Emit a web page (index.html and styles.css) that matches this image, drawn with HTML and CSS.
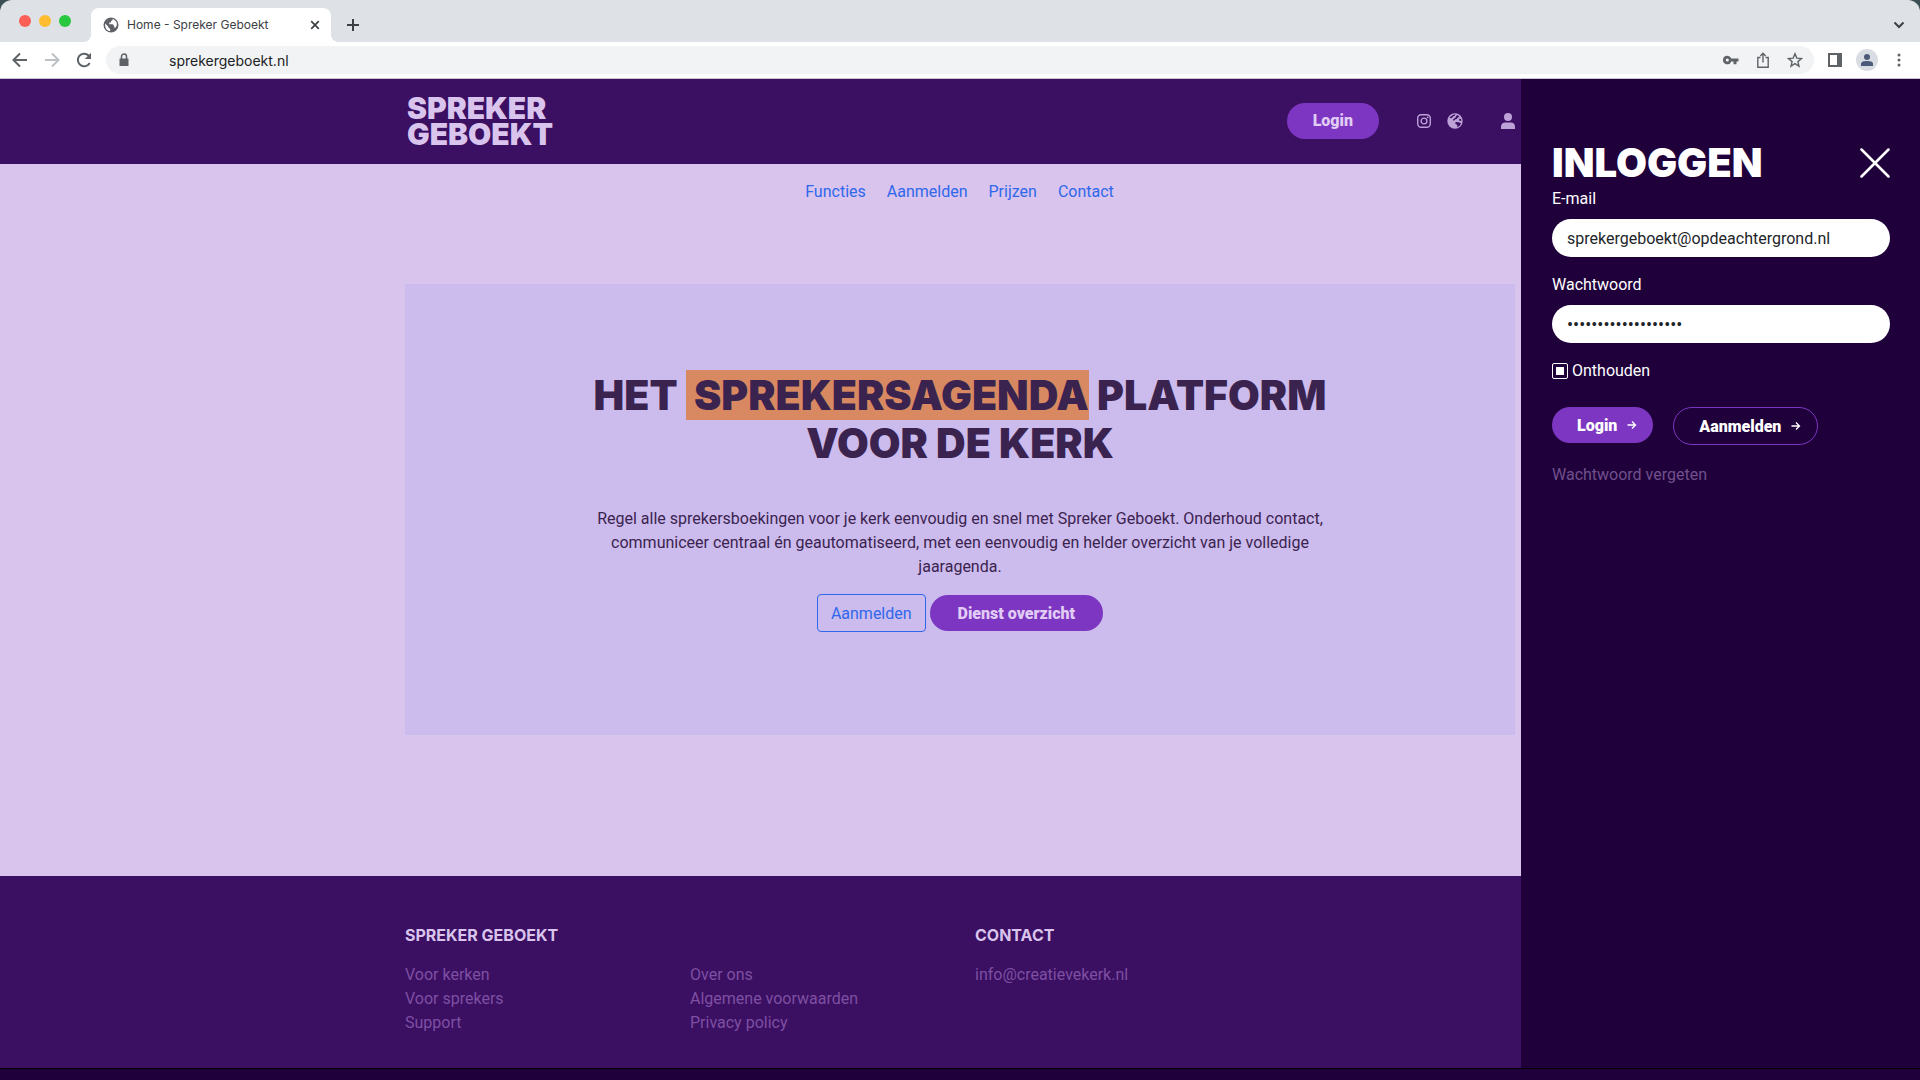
FILE: index.html
```
<!DOCTYPE html>
<html lang="nl">

<head>
    <meta charset="utf-8">
    <title>Home - Spreker Geboekt</title>
    <link rel="stylesheet" href="styles.css">
</head>

<body>
    <div class="browser">
        <div class="tabbar">
            <div class="lights">
                <span class="light red"></span>
                <span class="light yellow"></span>
                <span class="light green"></span>
            </div>
            <div class="tab">
                <svg width="16" height="16" viewBox="0 0 16 16"><circle cx="8" cy="8" r="7.5" fill="#5f6368"/><path d="M2.2 6.5l3.2 3.2v1.1l1.7 1v2.3C4 13.9 1.6 11 2.2 6.5zM9.5 1.9v1.3l-1.5.8v1.5H6.3v1.8h3.5l1.3 1.6v1.5h1.7c1-1.4 1.4-3 .9-4.6-.6-1.9-2.2-3.4-4.2-3.9z" fill="#fff"/></svg>
                <span class="tab-title">Home - Spreker Geboekt</span>
                <button class="icon-btn" aria-label="Tab sluiten">
                    <svg width="10" height="10" viewBox="0 0 10 10"><path d="M1.2 1.2l7.6 7.6M8.8 1.2L1.2 8.8" stroke="#3c4043" stroke-width="1.7" fill="none"/></svg>
                </button>
            </div>
            <button class="icon-btn new-tab" aria-label="Nieuw tabblad">
                <svg width="14" height="14" viewBox="0 0 14 14"><path d="M7 1v12M1 7h12" stroke="#3c4043" stroke-width="2" fill="none"/></svg>
            </button>
            <button class="icon-btn tab-search" aria-label="Tabbladen zoeken">
                <svg width="12" height="8" viewBox="0 0 12 8"><path d="M1.5 1.5L6 6l4.5-4.5" stroke="#3c4043" stroke-width="2" fill="none"/></svg>
            </button>
        </div>
        <div class="toolbar">
            <div class="history">
                <button class="icon-btn" aria-label="Vorige">
                    <svg width="16" height="16" viewBox="0 0 16 16"><path d="M15 8H2M8 1.5L1.5 8 8 14.5" stroke="#5f6368" stroke-width="2" fill="none"/></svg>
                </button>
                <button class="icon-btn" aria-label="Volgende">
                    <svg width="16" height="16" viewBox="0 0 16 16"><path d="M1 8h13M8 1.5L14.5 8 8 14.5" stroke="#bdc1c6" stroke-width="2" fill="none"/></svg>
                </button>
                <button class="icon-btn" aria-label="Vernieuwen">
                    <svg width="16" height="16" viewBox="0 0 16 16"><path d="M13.7 11A6.3 6.3 0 1 1 12.6 3.5L14 5" stroke="#5f6368" stroke-width="2" fill="none"/><path d="M15 .8V7H8.8z" fill="#5f6368"/></svg>
                </button>
            </div>
            <div class="omnibox">
                <svg width="10" height="14" viewBox="0 0 10 14"><path d="M.5 5.5h9V13h-9z" fill="#5f6368"/><path d="M2.5 6V3.5a2.5 2.5 0 0 1 5 0V6" stroke="#5f6368" stroke-width="1.5" fill="none"/></svg>
                <input class="url" type="text" value="sprekergeboekt.nl" aria-label="Adres">
                <svg width="16" height="14" viewBox="0 0 16 14"><path d="M4.3 2.7a4.3 4.3 0 1 0 4 5.8h2.2v2.7h3V8.5H15.5v-3H8.3a4.3 4.3 0 0 0-4-2.8zm0 2.7a1.6 1.6 0 1 1 0 3.2 1.6 1.6 0 0 1 0-3.2z" fill="#5f6368"/></svg>
                <svg width="12" height="16" viewBox="0 0 12 16"><path d="M3.5 5.5H.8v9.7h10.4V5.5H8.5M6 10.5V1.5M3.3 4L6 1.3 8.7 4" stroke="#5f6368" stroke-width="1.4" fill="none"/></svg>
                <svg width="16" height="16" viewBox="0 0 16 16"><path d="M8 1.8l1.8 4.3 4.7.4-3.6 3.1 1.1 4.6L8 11.7l-4 2.5 1.1-4.6L1.5 6.5l4.7-.4z" stroke="#5f6368" stroke-width="1.4" fill="none"/></svg>
            </div>
            <button class="icon-btn" aria-label="Zijpaneel">
                <svg width="14" height="14" viewBox="0 0 14 14"><path d="M1 1h12v12H1z" stroke="#5f6368" stroke-width="2" fill="none"/><path d="M9 1h4v12H9z" fill="#5f6368"/></svg>
            </button>
            <button class="icon-btn avatar" aria-label="Profiel">
                <svg width="12" height="12" viewBox="0 0 12 12"><circle cx="6" cy="3" r="3" fill="#4a5a78"/><path d="M0 12V9.5C0 7.8 3 7 6 7s6 .8 6 2.5V12z" fill="#4a5a78"/></svg>
            </button>
            <button class="icon-btn more" aria-label="Menu">
                <svg width="4" height="14" viewBox="0 0 4 14"><circle cx="2" cy="2" r="1.5" fill="#5f6368"/><circle cx="2" cy="7" r="1.5" fill="#5f6368"/><circle cx="2" cy="12" r="1.5" fill="#5f6368"/></svg>
            </button>
        </div>
    </div>
    <div class="view">
        <div class="site">
            <header class="header">
                <div class="container header-row">
                    <a class="logo" href="#">Spreker<br>Geboekt</a>
                    <button class="btn">Login</button>
                    <nav class="social">
                        <a href="#" aria-label="Instagram"><svg width="14" height="14" viewBox="0 0 14 14"><rect x=".7" y=".7" width="12.6" height="12.6" rx="3.5" stroke="#bda2d8" stroke-width="1.4" fill="none"/><circle cx="7" cy="7" r="2.9" stroke="#bda2d8" stroke-width="1.4" fill="none"/><circle cx="10.7" cy="3.3" r=".9" fill="#bda2d8"/></svg></a>
                        <a href="#" aria-label="Website"><svg width="16" height="16" viewBox="0 0 16 16"><circle cx="8" cy="8" r="7.7" fill="#bda2d8"/><path d="M4 3.2C5.500 2 7 1.500 8.500 1.600L7.500 3 6 3.300 5.500 4.500 3.500 5.200 2.500 5zM10 2l2.500 1.300L11 4.500 9.500 6 8 6.500 6.500 8 6 6.500 8.500 4.500zM12.500 5.500l1.500.5.300 2L12 7.500zM8.500 9l3 .3 2.500 1-1.500 2.700-2.500 1.200L10.500 12 8.500 11z" fill="#3b0d62"/></svg></a>
                    </nav>
                    <a class="account" href="#" aria-label="Account"><svg width="14" height="16" viewBox="0 0 14 16"><circle cx="7" cy="4" r="4" fill="#bda2d8"/><path d="M0 16v-2.5C0 11 2 9.5 4 9.5h6c2 0 4 1.5 4 4V16z" fill="#bda2d8"/></svg></a>
                </div>
            </header>
            <main class="main">
                <nav class="menu">
                    <a href="#">Functies</a>
                    <a href="#">Aanmelden</a>
                    <a href="#">Prijzen</a>
                    <a href="#">Contact</a>
                </nav>
                <section class="container hero">
                    <div class="hero-text">
                        <h1>Het <mark>&nbsp;Sprekersagenda</mark> platform voor de kerk</h1>
                        <p>Regel alle sprekersboekingen voor je kerk eenvoudig en snel met Spreker Geboekt. Onderhoud contact, communiceer centraal én geautomatiseerd, met een eenvoudig en helder overzicht van je volledige jaaragenda.</p>
                        <div class="hero-actions">
                            <button class="btn-line">Aanmelden</button>
                            <button class="btn">Dienst overzicht</button>
                        </div>
                    </div>
                </section>
            </main>
            <footer class="footer">
                <div class="container footer-grid">
                    <h2>Spreker Geboekt</h2>
                    <h2 class="contact-title">Contact</h2>
                    <ul>
                        <li><a href="#">Voor kerken</a></li>
                        <li><a href="#">Voor sprekers</a></li>
                        <li><a href="#">Support</a></li>
                    </ul>
                    <ul>
                        <li><a href="#">Over ons</a></li>
                        <li><a href="#">Algemene voorwaarden</a></li>
                        <li><a href="#">Privacy policy</a></li>
                    </ul>
                    <ul>
                        <li><a href="#">info@creatievekerk.nl</a></li>
                    </ul>
                </div>
            </footer>
        </div>
        <aside class="panel">
            <div class="panel-head">
                <h2>Inloggen</h2>
                <button class="icon-btn" aria-label="Sluiten">
                    <svg width="30" height="30" viewBox="0 0 30 30"><path d="M1.5 1.5l27 27M28.5 1.5l-27 27" stroke="#fff" stroke-width="2.5" stroke-linecap="round" fill="none"/></svg>
                </button>
            </div>
            <form>
                <label for="email">E-mail</label>
                <input class="field" type="email" id="email" value="sprekergeboekt@opdeachtergrond.nl">
                <label for="pass">Wachtwoord</label>
                <input class="field" type="password" id="pass" value="sprekersagenda12345">
                <div class="remember">
                    <input type="checkbox" id="remember" checked>
                    <label for="remember">Onthouden</label>
                </div>
                <div class="panel-actions">
                    <button class="btn" type="button">Login <svg width="10" height="10" viewBox="0 0 10 10"><path d="M.5 5h8M5 1.5L8.5 5 5 8.5" stroke="#fff" stroke-width="1.3" fill="none"/></svg></button>
                    <button class="btn btn-outline" type="button">Aanmelden <svg width="10" height="10" viewBox="0 0 10 10"><path d="M.5 5h8M5 1.5L8.5 5 5 8.5" stroke="#fff" stroke-width="1.3" fill="none"/></svg></button>
                </div>
                <a class="forgot" href="#">Wachtwoord vergeten</a>
            </form>
        </aside>
    </div>
    <div class="strip"></div>
</body>

</html>
```
FILE: styles.css
```
* {
    box-sizing: border-box;
}

body {
    margin: 0;
    min-height: 100vh;
    display: flex;
    flex-direction: column;
    background: #3c4f55;
    color: #3b2350;
    font-family: Roboto, "Liberation Sans", sans-serif;
    font-size: 16px;
    line-height: 24px;
}

h1,
h2,
p,
ul {
    margin: 0;
    padding: 0;
}

h1,
h2,
.logo {
    font-family: Inter, Roboto, sans-serif;
    text-transform: uppercase;
}

a {
    text-decoration: none;
}

svg {
    display: block;
    flex: none;
}

button {
    font-family: inherit;
    cursor: pointer;
}

.icon-btn {
    display: flex;
    padding: 0;
    border: 0;
    background: none;
}

/* browser */
.browser {
    background: #dee1e6;
    border-radius: 12px 12px 0 0;
    border-bottom: 1px solid #c9c5cf;
    font-family: Inter, Roboto, sans-serif;
}

.tabbar {
    display: flex;
    align-items: center;
    height: 42px;
    padding: 0 15px 0 19px;
}

.lights {
    display: flex;
    gap: 8px;
    margin-right: 20px;
}

.light {
    width: 12px;
    height: 12px;
    border-radius: 50%;
}

.red {
    background: #fe5f57;
}

.yellow {
    background: #febc2e;
}

.green {
    background: #28c840;
}

.tab {
    position: relative;
    display: flex;
    align-items: center;
    align-self: flex-end;
    width: 240px;
    height: 34px;
    padding: 0 11px 0 12px;
    background: #fff;
    border-radius: 8px 8px 0 0;
    color: #3c4043;
    font-size: 12px;
}

.tab::before,
.tab::after {
    content: "";
    position: absolute;
    bottom: 0;
    left: -8px;
    width: 8px;
    height: 8px;
    background: radial-gradient(circle at 0 0, transparent 8px, #fff 8px);
}

.tab::after {
    left: 100%;
    background: radial-gradient(circle at 100% 0, transparent 8px, #fff 8px);
}

.tab-title {
    flex: 1;
    padding-left: 8px;
}

.new-tab {
    margin: 8px 0 0 15px;
}

.tab-search {
    margin: 8px 0 0 auto;
}

.toolbar {
    display: flex;
    align-items: center;
    gap: 14px;
    height: 36px;
    padding: 0 19px 0 12px;
    background: #fff;
}

.history {
    display: flex;
    gap: 16px;
}

.omnibox {
    flex: 1;
    display: flex;
    align-items: center;
    gap: 18px;
    height: 28px;
    padding: 0 11px 0 13px;
    background: #f1f3f4;
    border-radius: 14px;
}

.url {
    flex: 1;
    padding: 0 0 0 22px;
    border: 0;
    background: none;
    color: #202124;
    font-family: inherit;
    font-size: 14px;
}

.avatar {
    width: 22px;
    height: 22px;
    align-items: center;
    justify-content: center;
    border-radius: 50%;
    background: #dadce4;
}

.more {
    margin-left: 5px;
}

/* site */
.view {
    flex: 1;
    display: flex;
    background: #1f003b;
}

.site {
    flex: 1;
    display: flex;
    flex-direction: column;
    background: #d8c4ec;
}

.container {
    width: 1110px;
    margin: 0 6px 0 auto;
}

.header {
    display: flex;
    height: 85px;
    background: #3b0f62;
}

.header-row {
    display: flex;
    align-items: center;
    padding-bottom: 2px;
}

.logo {
    flex: 1;
    padding-left: 2px;
    color: #d8c4ec;
    font-size: 30px;
    font-weight: 900;
    line-height: 26px;
}

.btn {
    display: inline-flex;
    align-items: center;
    gap: 10px;
    height: 36px;
    padding: 0 26px;
    border: 0;
    border-radius: 18px;
    background: #7c36c1;
    color: #e0ccf4;
    font-size: 16px;
    font-weight: 900;
}

.social {
    display: flex;
    align-items: center;
    gap: 16px;
    margin: 0 38px;
}

.main {
    flex: 1;
}

.menu {
    display: flex;
    justify-content: center;
    gap: 21px;
    padding: 16px 0 80px 398px;
}

.menu a {
    color: #2f68ec;
}

.hero {
    display: flex;
    justify-content: center;
    padding: 87px 0 103px;
    background: #ccbbed;
    text-align: center;
}

.hero-text {
    width: 740px;
}

.hero h1 {
    margin-bottom: 40px;
    font-size: 41px;
    font-weight: 900;
    line-height: 48px;
}

.hero mark {
    background: #d98961;
    color: inherit;
}

.hero-actions {
    display: flex;
    align-items: center;
    justify-content: center;
    gap: 4px;
    margin-top: 15px;
}

.hero-actions .btn {
    padding: 0 28px;
}

.btn-line {
    height: 38px;
    padding: 0 13px;
    border: 1px solid #2f68ec;
    border-radius: 4px;
    background: none;
    color: #2f68ec;
    font-size: 16px;
}

/* footer */
.footer {
    padding: 47px 0 33px;
    background: #3b0f62;
}

.footer-grid {
    display: grid;
    grid-template-columns: 285px 285px 1fr;
    row-gap: 16px;
}

.footer h2 {
    color: #d8c4ec;
    font-size: 16px;
}

.contact-title {
    grid-column: 3;
}

.footer ul {
    list-style: none;
}

.footer a {
    color: #7e4fa3;
}

/* login */
.panel {
    width: 399px;
    padding: 60px 30px 0 31px;
    color: #fff;
}

.panel-head {
    display: flex;
    align-items: center;
    justify-content: space-between;
}

.panel h2 {
    font-size: 40px;
    font-weight: 900;
    line-height: 48px;
}

.panel label {
    display: block;
}

.field {
    display: block;
    width: 100%;
    height: 38px;
    margin: 8px 0 16px;
    padding: 0 15px;
    border: 0;
    border-radius: 19px;
    background: #fff;
    color: #212529;
    font-family: inherit;
    font-size: 16px;
}

.field[type=password] {
    font-size: 18px;
}

.remember {
    display: flex;
    align-items: center;
    gap: 4px;
}

.remember input {
    appearance: none;
    width: 16px;
    height: 16px;
    margin: 0;
    border: 1px solid #fff;
    border-radius: 2px;
    background: #fff content-box;
    padding: 3px;
}

.panel-actions {
    display: flex;
    align-items: flex-start;
    gap: 20px;
    margin: 24px 0 18px;
}

.panel .btn {
    color: #fff;
    padding: 0 16px 0 25px;
}

.panel .btn-outline {
    height: 38px;
    border: 1px solid #7c36c1;
    border-radius: 19px;
    background: none;
}

.forgot {
    color: #71518c;
}

.strip {
    height: 12px;
    border-top: 1px solid #000;
    background: #1f003b;
}
```
